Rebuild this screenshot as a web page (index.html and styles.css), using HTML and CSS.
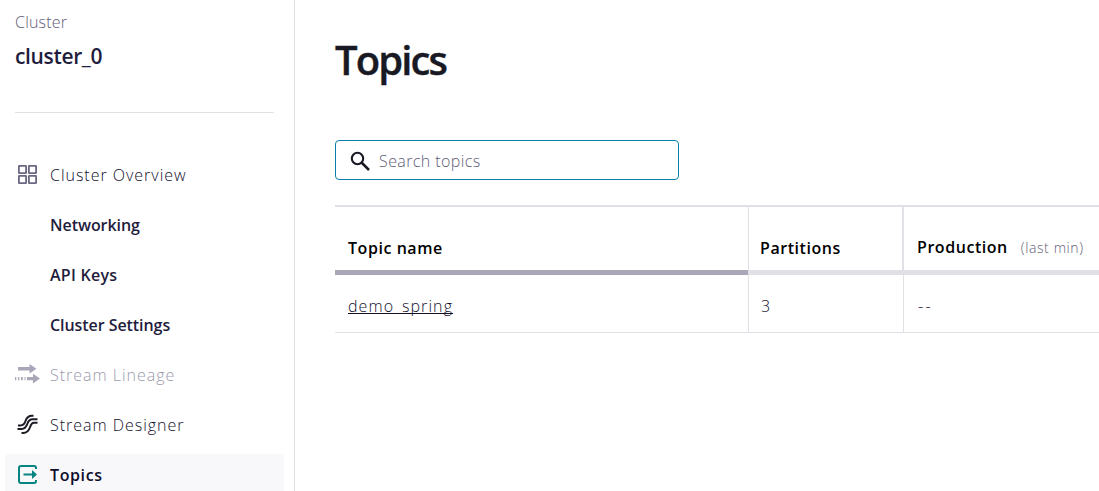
FILE: index.html
```html
<!DOCTYPE html>
<html lang="en">
<head>
  <meta charset="utf-8">
  <title>Topics</title>
  <link rel="stylesheet" href="styles.css">
</head>
<body>
  <aside class="sidebar">
    <div class="cluster-info">
      <div class="cluster-label">Cluster</div>
      <div class="cluster-name">cluster_0</div>
    </div>
    <nav class="menu">
      <a class="menu-item">
        <svg class="menu-icon" width="26" height="26" viewBox="0 0 26 26" fill="none" stroke="#6b6883" stroke-width="1.8">
          <rect x="3.9" y="3.9" width="7.2" height="7.2" rx="0.4"/>
          <rect x="13.9" y="3.9" width="7.2" height="7.2" rx="0.4"/>
          <rect x="3.9" y="13.9" width="7.2" height="7.2" rx="0.4"/>
          <rect x="13.9" y="13.9" width="7.2" height="7.2" rx="0.4"/>
        </svg>
        <span>Cluster Overview</span>
      </a>
      <a class="menu-item sub">Networking</a>
      <a class="menu-item sub keys">API Keys</a>
      <a class="menu-item sub">Cluster Settings</a>
      <a class="menu-item disabled">
        <svg class="menu-icon" width="26" height="26" viewBox="0 0 26 26" fill="#a8a7b8">
          <path d="M3 5h11.500V2L21.500 6.700l-7 4.800V8.500H3z"/>
          <path d="M0 15h1.300v3.200H0zM3 15h1.300v3.200H3zM6 15h1.800v3.200H6zM9.500 15h1v3.200h-1zM12 15h6V11.800l7 4.800-7 4.900v-3.300h-6z"/>
        </svg>
        <span>Stream Lineage</span>
      </a>
      <a class="menu-item">
        <svg class="menu-icon" width="26" height="26" viewBox="0 0 26 26" fill="none" stroke="#1c1b26" stroke-width="2">
          <path d="M3 13.500h2.500c3 0 4-1.500 5-4.500s3-5.300 6.500-5.300h1.500"/>
          <path d="M2.500 17h4c4 0 5-2.500 6-5.500s2.500-4.300 5-4.300h5"/>
          <path d="M6.500 21h1.500c4 0 6-2.500 7-5.700s1.700-4.500 4-4.500h3.500"/>
        </svg>
        <span>Stream Designer</span>
      </a>
      <a class="menu-item active">
        <svg class="menu-icon" width="26" height="26" viewBox="0 0 26 26" fill="none" stroke="#07847f" stroke-width="2">
          <path d="M21 7V6a2 2 0 0 0-2-2H6a2 2 0 0 0-2 2v13a2 2 0 0 0 2 2h13a2 2 0 0 0 2-2v-1"/>
          <path d="M8.500 12.500h9"/>
          <path d="M17 8l5 4.500-5 4.500z" fill="#07847f" stroke="none"/>
        </svg>
        <span>Topics</span>
      </a>
    </nav>
  </aside>
  <main class="content">
    <h1>Topics</h1>
    <div class="search">
      <svg width="22" height="22" viewBox="0 0 22 22" fill="none" stroke="#191924">
        <circle cx="7.500" cy="8.500" r="5.700" stroke-width="2.100"/>
        <path d="M11.500 12.500l7.500 7.500" stroke-width="2.500"/>
      </svg>
      <span>Search topics</span>
    </div>
    <div class="table">
      <div class="cell head sorted">Topic name</div>
      <div class="cell head">Partitions</div>
      <div class="cell head last">Production<span class="note">(last min)</span></div>
      <div class="cell"><a class="topic-link">demo_spring</a></div>
      <div class="cell">3</div>
      <div class="cell last dashes">--</div>
    </div>
  </main>
</body>
</html>
```

FILE: styles.css
```css
* {
  box-sizing: border-box;
}
body {
  margin: 0;
  height: 491px;
  display: flex;
  overflow: hidden;
  background-color: white;
  color: #110f2c;
  font-family: "Open Sans", "Noto Sans", sans-serif;
  font-size: 16px;
  font-weight: 300;
}
.sidebar {
  flex: none;
  width: 295px;
  height: 491px;
  overflow: hidden;
  border-right: 1px solid #e0e0e6;
}
.cluster-info {
  height: 113px;
  margin: 0 20px 41px 15px;
  padding-top: 10px;
  border-bottom: 1px solid #e0e0e6;
}
.cluster-label {
  line-height: 24px;
  color: #5f5d78;
  letter-spacing: 0.2px;
}
.cluster-name {
  margin-top: 7px;
  color: #1f1d3d;
  font-size: 21px;
  font-weight: 600;
  letter-spacing: -0.35px;
  line-height: 30px;
}
.menu {
  display: flex;
  flex-direction: column;
  gap: 8px;
  padding: 0 10px 0 5px;
}
.menu-item {
  flex: none;
  display: flex;
  align-items: center;
  height: 42px;
  padding-left: 10px;
  border-radius: 4px;
  letter-spacing: 0.98px;
  white-space: nowrap;
}
.menu-icon {
  flex: none;
  margin-right: 9px;
}
.sub {
  padding-left: 45px;
  color: #1f1d3d;
  font-weight: 600;
  letter-spacing: -0.06px;
}
.keys {
  letter-spacing: 0.25px;
}
.disabled {
  color: #9b9aad;
}
.active {
  background-color: #f8f8fa;
  color: #0f0d2b;
  font-weight: 600;
  letter-spacing: 0.6px;
}
.content {
  flex: 1;
  min-width: 0;
  padding: 30px 0 0 40px;
}
h1 {
  margin: 0 0 50px;
  color: #191924;
  font-size: 40px;
  font-weight: 600;
  letter-spacing: -1.9px;
  line-height: 59px;
  padding-bottom: 1px;
  -webkit-text-stroke: 0.4px #191924;
}
.search {
  display: flex;
  align-items: center;
  width: 344px;
  height: 40px;
  padding: 2px 0 0 14px;
  border: 1px solid #0a7fae;
  border-radius: 4px;
  color: #5f5d78;
  letter-spacing: 0.4px;
}
.search svg {
  margin-right: 7px;
}
.table {
  display: grid;
  grid-template-columns: 413px 155px 1fr;
  margin-top: 25px;
  border-top: 2px solid #e0e0e6;
}
.cell {
  display: flex;
  align-items: center;
  height: 58px;
  padding: 4px 0 0 12px;
  border-left: 1px solid #e0e0e6;
  border-bottom: 1px solid #e0e0e6;
  white-space: nowrap;
}
.cell.sorted,
.cell:nth-child(4) {
  padding-left: 13px;
  border-left: none;
}
.head {
  height: 68px;
  padding: 18px 0 0 11px;
  border-bottom: 5px solid #e0e0e6;
  color: black;
  font-weight: 600;
  letter-spacing: 0.55px;
}
.sorted {
  border-bottom-color: #a8a7b8;
}
.cell.last {
  padding-left: 14px;
}
.cell.head.last {
  margin-left: -1px;
  padding: 16px 0 0 13px;
  border-left-width: 2px;
}
.note {
  margin-left: 13px;
  padding-top: 1px;
  color: #5f5d78;
  font-size: 14px;
  font-weight: 300;
  letter-spacing: 0.6px;
}
.topic-link {
  letter-spacing: 1.1px;
  text-decoration: underline;
  text-decoration-skip-ink: none;
}
.dashes {
  letter-spacing: 2.4px;
}
```
